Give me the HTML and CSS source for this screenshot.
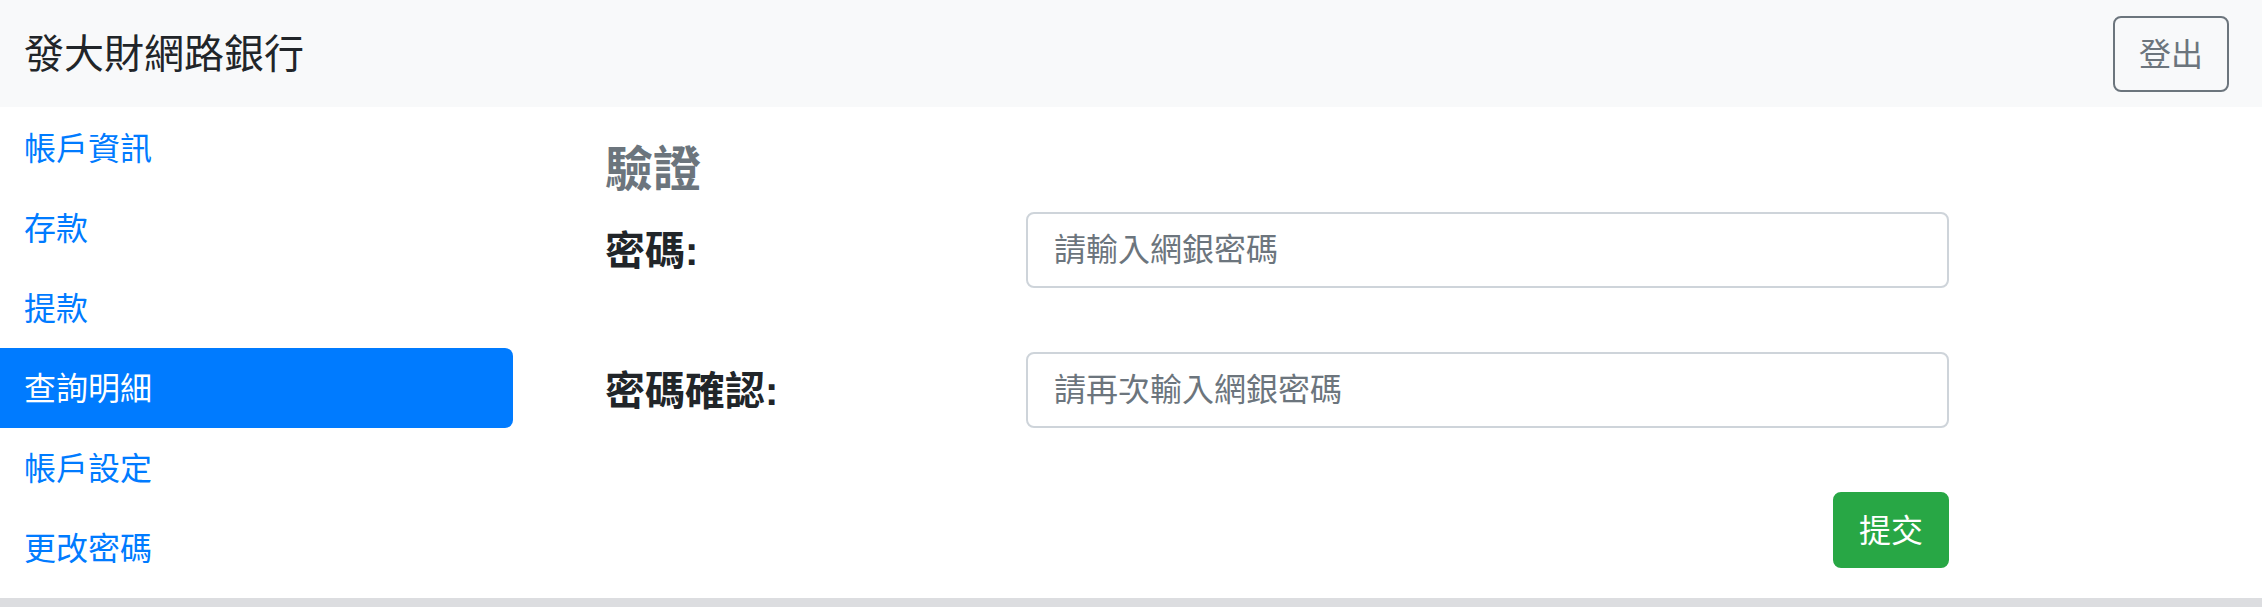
FILE: index.html
```html
<!DOCTYPE html>
<html lang="zh-Hant">
<head>
<meta charset="utf-8">
<title>發大財網路銀行</title>
<link rel="stylesheet" href="styles.css">
</head>
<body>
<div class="app">
  <header class="navbar">
    <span class="brand">發大財網路銀行</span>
    <button class="btn btn-outline" type="button">登出</button>
  </header>
  <div class="layout">
    <nav class="sidebar">
      <a class="nav-link" href="#">帳戶資訊</a>
      <a class="nav-link" href="#">存款</a>
      <a class="nav-link" href="#">提款</a>
      <a class="nav-link active" href="#">查詢明細</a>
      <a class="nav-link" href="#">帳戶設定</a>
      <a class="nav-link" href="#">更改密碼</a>
    </nav>
    <main class="content">
      <h4 class="title">驗證</h4>
      <form class="form">
        <div class="form-row">
          <label class="form-label" for="pw">密碼:</label>
          <input class="form-control" id="pw" type="password" placeholder="請輸入網銀密碼">
        </div>
        <div class="form-row">
          <label class="form-label" for="pw2">密碼確認:</label>
          <input class="form-control" id="pw2" type="password" placeholder="請再次輸入網銀密碼">
        </div>
        <div class="actions">
          <button class="btn btn-success" type="button">提交</button>
        </div>
      </form>
    </main>
  </div>
</div>
</body>
</html>
```
FILE: styles.css
```css
html, body {
  margin: 0;
  padding: 0;
  background: #dcdde0;
}
body {
  font-family: "Liberation Sans", "Noto Sans CJK TC", sans-serif;
  color: #212529;
  font-size: 32px;
  line-height: 1.5;
}
.app {
  background: #ffffff;
  height: 598px;
}
.navbar {
  display: flex;
  align-items: center;
  justify-content: space-between;
  background: #f8f9fa;
  height: 107px;
  box-sizing: border-box;
  padding: 0 33px 0 24px;
}
.brand {
  font-size: 40px;
  line-height: 60px;
  color: #212529;
}
.btn {
  font-family: inherit;
  font-size: 32px;
  line-height: 48px;
  padding: 13px 24px 11px;
  border-radius: 8px;
  border: 2px solid transparent;
  cursor: pointer;
}
.btn-outline {
  background: transparent;
  color: #6c757d;
  border-color: #6c757d;
}
.btn-success {
  background: #28a745;
  border-color: #28a745;
  color: #ffffff;
}
.layout {
  display: grid;
  grid-template-columns: 513px 1fr;
}
.sidebar {
  display: flex;
  flex-direction: column;
  padding-top: 1px;
}
.nav-link {
  display: block;
  padding: 17px 24px 15px;
  font-size: 32px;
  line-height: 48px;
  color: #007bff;
  text-decoration: none;
  border-radius: 0 8px 8px 0;
}
.nav-link.active {
  background: #007bff;
  color: #ffffff;
}
.content {
  padding: 34px 0 0 92px;
}
.title {
  margin: 0 0 13px;
  font-size: 48px;
  line-height: 58px;
  font-weight: 700;
  color: #6c757d;
}
.form {
  width: 1344px;
}
.form-row {
  display: grid;
  grid-template-columns: 421px 1fr;
  align-items: center;
  margin-bottom: 64px;
}
.form-label {
  font-size: 40px;
  line-height: 60px;
  font-weight: 700;
  color: #212529;
  padding-top: 2px;
}
.form-control {
  font-family: inherit;
  font-size: 32px;
  line-height: 48px;
  height: 76px;
  box-sizing: border-box;
  padding: 12px 26px;
  border: 2px solid #ced4da;
  border-radius: 8px;
  color: #495057;
  background: #ffffff;
  width: 100%;
}
.form-control::placeholder {
  color: #6c757d;
  opacity: 1;
}
.actions {
  display: flex;
  justify-content: flex-end;
}
```
